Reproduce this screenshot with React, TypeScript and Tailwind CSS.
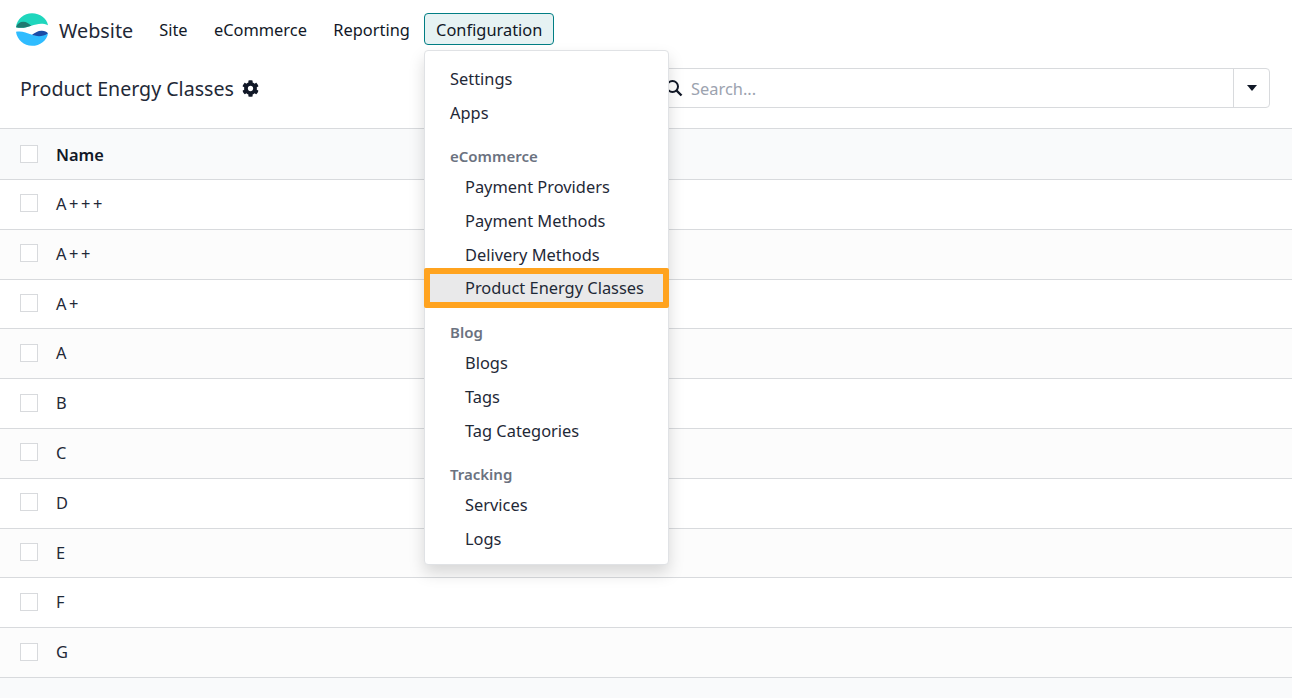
import { FaCog } from "react-icons/fa";

const rows = ["A+++", "A++", "A+", "A", "B", "C", "D", "E", "F", "G"];

function Logo() {
  return (
    <svg viewBox="50 40 96 98" className="h-[33px] w-[32px]">
      <path d="M50 82C52 58 74 40 98 40C122 40 143 56 146 76C128 68 112 72 96 78C80 84 64 86 50 82Z" fill="#1fd6bd" />
      <path d="M50 82C54 72 62 66 72 66C82 66 88 72 96 78C80 84 64 86 50 82Z" fill="#1f7a70" />
      <path d="M50 96C66 92 80 98 96 104C112 110 130 108 146 100C143 122 122 138 98 138C74 138 53 120 50 96Z" fill="#2fbcff" />
      <path d="M98 105C108 98 118 92 128 93C136 94 142 96 146 100C130 112 112 110 98 105Z" fill="#1a4ba6" />
    </svg>
  );
}

function SearchIcon() {
  return (
    <svg viewBox="0 0 18 18" className="h-[18px] w-[18px]" fill="none" stroke="#111827">
      <circle cx="7.5" cy="7.5" r="5.5" strokeWidth="2" />
      <path d="M11.5 11.5L16.5 16.5" strokeWidth="2.4" />
    </svg>
  );
}

function Checkbox() {
  return <span className="block h-[18px] w-[18px] border-[1.5px] border-[#d8dadd] bg-white" />;
}

function NavItem({ label, active }: { label: string; active?: boolean }) {
  return (
    <div
      className={
        active
          ? "-mt-[2px] ml-[1px] flex h-[32px] items-center rounded-[4px] border border-[#017e84] bg-[#e6f2f3] px-[11px] pt-[4px] text-[#111827]"
          : "-mt-[2px] flex h-[32px] items-center px-[13.2px] pt-[4px] text-[#111827]"
      }
    >
      {label}
    </div>
  );
}

function MenuHeader({ label, className }: { label: string; className: string }) {
  return <div className={`flex items-center pl-[25px] text-[15px] font-semibold text-[#6b7280] ${className}`}>{label}</div>;
}

function MenuItem({ label, sub }: { label: string; sub?: boolean }) {
  return (
    <div className={`flex h-[34px] items-center text-[#1f2937] ${sub ? "pl-[40px]" : "pl-[25px]"}`}>{label}</div>
  );
}

export default function App() {
  return (
    <div
      className="relative h-[698px] w-[1292px] overflow-hidden bg-[#f9fafb] text-[16.4px] text-[#1f2937]"
      style={{ fontFamily: '"Noto Sans", "Open Sans", sans-serif' }}
    >
      {/* Top bar */}
      <div className="flex h-[60px] items-center bg-white pb-[1px] pl-[16px]">
        <Logo />
        <span className="ml-[11px] mr-[12.8px] pt-[2px] text-[19.8px] text-[#1f2937]">Website</span>
        <NavItem label="Site" />
        <NavItem label="eCommerce" />
        <NavItem label="Reporting" />
        <NavItem label="Configuration" active />
      </div>

      {/* Control panel */}
      <div className="flex h-[69px] items-start justify-between border-b border-[#d8dadd] bg-white pl-[20px] pr-[22px] pt-[8px]">
        <div className="flex h-[40px] items-center gap-[8px]">
          <span className="pt-[2px] text-[19.6px] text-[#1f2937]">Product Energy Classes</span>
          <FaCog className="h-[17px] w-[17px] text-[#111827]" />
        </div>
        <div className="flex h-[40px] w-[624px] rounded-[4px] border border-[#d8dadd] bg-white">
          <div className="flex flex-1 items-center pl-[18px] text-[#9ca3af]">
            <SearchIcon />
            <span className="ml-[8px] pt-[2px]">Search...</span>
          </div>
          <div className="flex w-[36px] items-center justify-center border-l border-[#d8dadd]">
            <span className="h-0 w-0 border-x-[5px] border-t-[6px] border-x-transparent border-t-[#111827]" />
          </div>
        </div>
      </div>

      {/* List */}
      <div className="flex h-[51px] items-center gap-[18px] border-b border-[#d8dadd] bg-[#f9fafb] pl-[20px]">
        <Checkbox />
        <span className="pt-[2px] font-semibold text-[#111827]">Name</span>
      </div>
      {rows.map((name, i) => (
        <div
          key={name}
          className={`flex h-[49.8px] items-center gap-[18px] border-b border-[#d8dadd] pb-[2px] pl-[20px] ${
            i % 2 === 0 ? "bg-white" : "bg-[#fcfcfc]"
          }`}
        >
          <Checkbox />
          <span className={name.includes("+") ? "pt-[2px] tracking-[2.6px]" : "pt-[2px]"}>{name}</span>
        </div>
      ))}

      {/* Configuration dropdown */}
      <div className="absolute left-[424px] top-[50px] h-[515px] w-[245px] rounded-[4px] border border-[#e0e2e5] bg-white pt-[11px] shadow-[0_8px_16px_rgba(0,0,0,0.15)]">
        <MenuItem label="Settings" />
        <MenuItem label="Apps" />
        <MenuHeader label="eCommerce" className="mt-[13px] h-[27px]" />
        <MenuItem label="Payment Providers" sub />
        <MenuItem label="Payment Methods" sub />
        <MenuItem label="Delivery Methods" sub />
        <div className="relative -mx-[1px] -mt-[4px] flex h-[40px] items-center rounded-[2px] border-[6px] border-[#ffa31f] bg-[#e9e9ea] pl-[35px] text-[#1f2937]">
          Product Energy Classes
        </div>
        <MenuHeader label="Blog" className="mt-[12px] h-[26px] pb-[2px]" />
        <MenuItem label="Blogs" sub />
        <MenuItem label="Tags" sub />
        <MenuItem label="Tag Categories" sub />
        <MenuHeader label="Tracking" className="mt-[13px] h-[27px]" />
        <MenuItem label="Services" sub />
        <MenuItem label="Logs" sub />
      </div>
    </div>
  );
}
